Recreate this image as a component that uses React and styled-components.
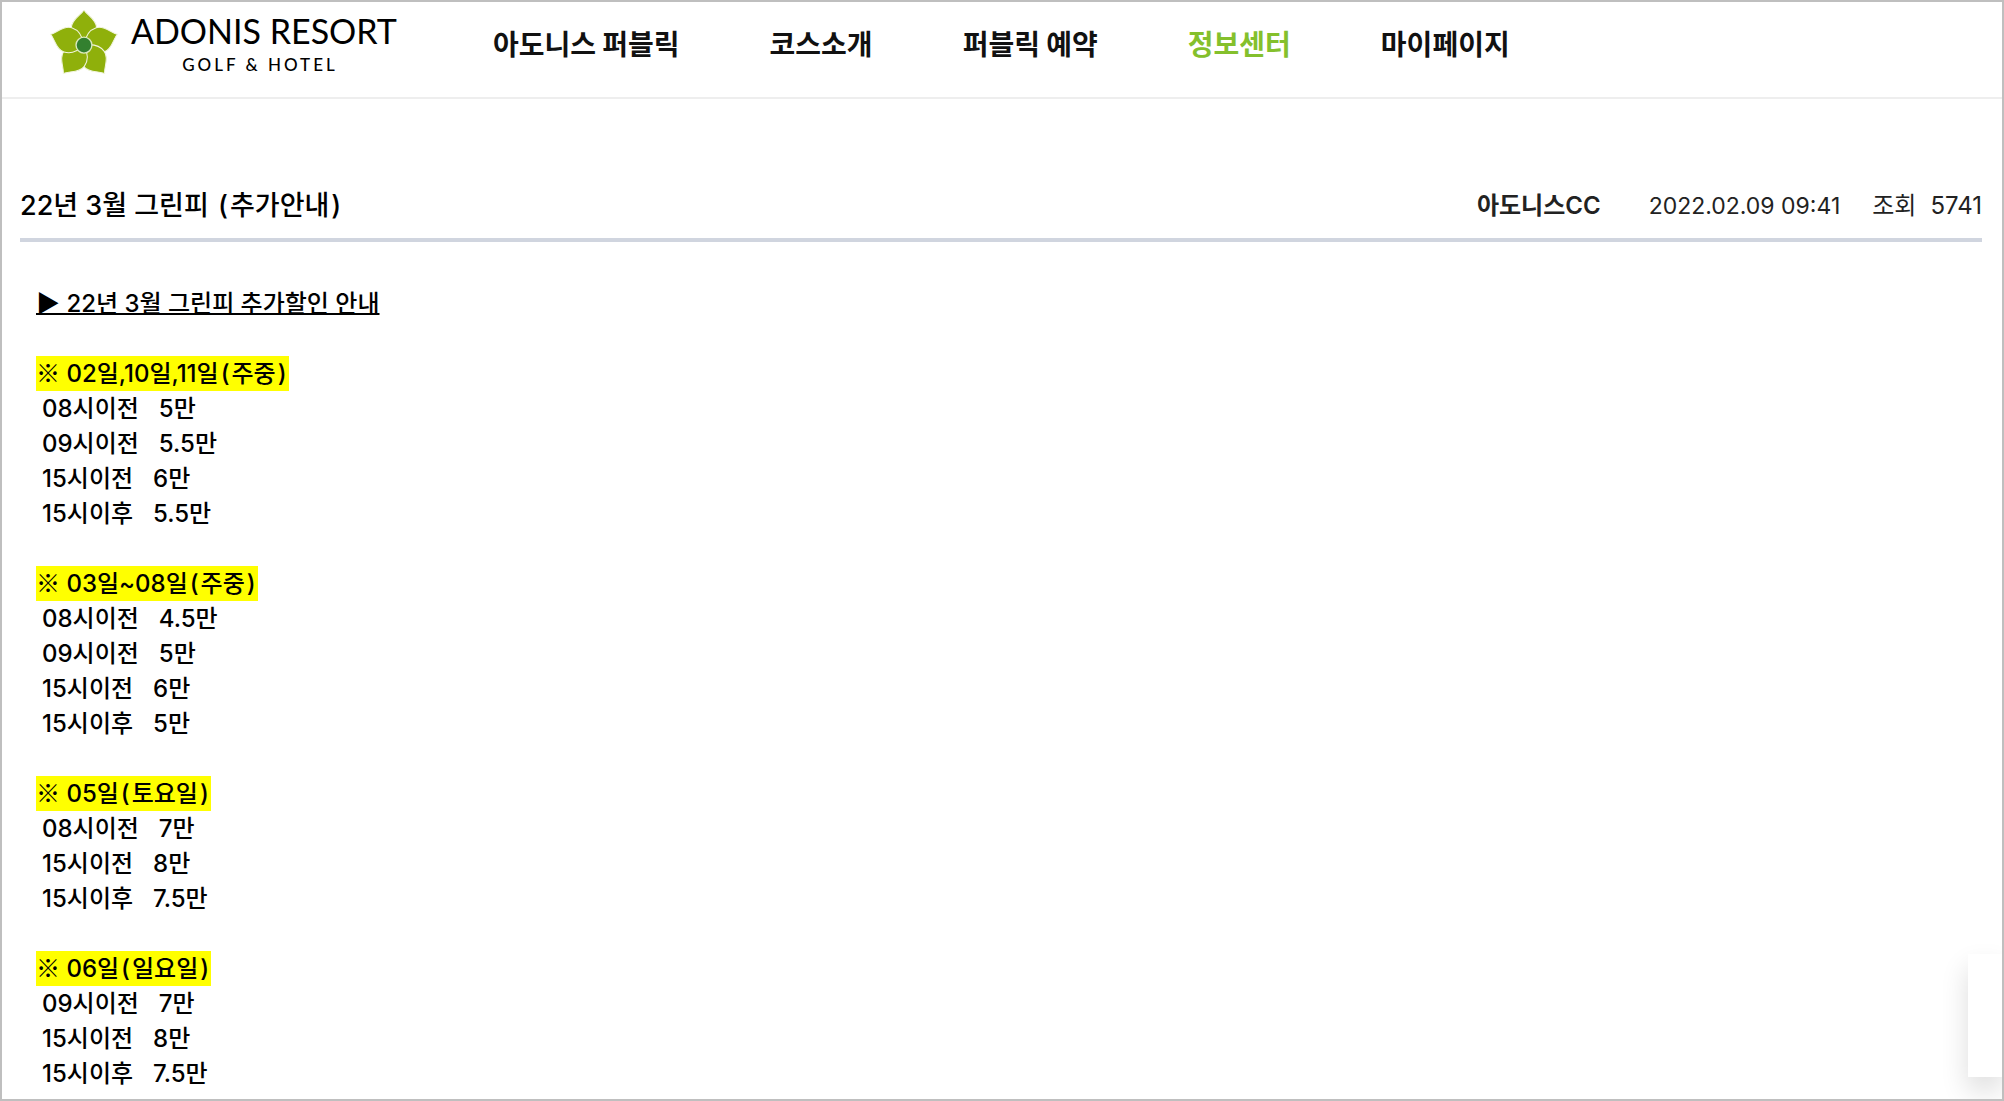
import React from "react";
import styled, { createGlobalStyle } from "styled-components";

const GlobalStyle = createGlobalStyle`
  *, *::before, *::after { box-sizing: border-box; }
  body {
    margin: 0;
    background: #fff;
    color: #000;
    font-family: Inter, "Noto Sans CJK KR", sans-serif;
  }
  h1, h2, p, ul { margin: 0; padding: 0; }
  ul { list-style: none; }
`;

const Page = styled.div`
  position: relative;
  min-height: 100vh;
  overflow: hidden;
  border: 2px solid #bfbfbf;
`;

const Header = styled.header`
  display: flex;
  align-items: flex-start;
  gap: 96px;
  height: 97px;
  padding: 8px 48px 0;
  border-bottom: 2px solid #eee;
`;

const Brand = styled.a`
  display: flex;
  align-items: flex-start;
  gap: 12px;
  color: #000;
  text-decoration: none;
`;

const BrandText = styled.span`
  display: flex;
  flex-direction: column;
  align-items: center;
`;

const BrandName = styled.span`
  font-family: Lato, sans-serif;
  font-size: 34px;
  line-height: 42px;
  white-space: nowrap;
`;

const BrandSub = styled.span`
  padding-right: 8px;
  font-family: Lato, sans-serif;
  font-size: 17px;
  font-weight: 500;
  line-height: 26px;
  letter-spacing: 3px;
  white-space: nowrap;
`;

const Menu = styled.ul`
  display: flex;
  gap: 90px;
  padding-top: 13px;
`;

const MenuLink = styled.a`
  font-family: "Noto Sans CJK KR", sans-serif;
  font-size: 28px;
  font-weight: 700;
  line-height: 40px;
  white-space: nowrap;
  text-decoration: none;
  color: ${({ $active }) => ($active ? "#84c02c" : "#111")};
`;

const Article = styled.article`
  padding: 86px 20px 8px 18px;
`;

const ArticleHead = styled.header`
  display: flex;
  justify-content: space-between;
  align-items: center;
  padding-bottom: 11px;
  border-bottom: 4px solid #d0d5df;
`;

const Title = styled.h1`
  font-size: 27px;
  font-weight: 500;
  line-height: 42px;
`;

const Meta = styled.div`
  display: flex;
  font-size: 24px;
  line-height: 42px;
  color: #222;
  white-space: nowrap;
`;

const Author = styled.strong`
  margin-right: 48px;
  font-weight: 600;
`;

const Posted = styled.time`
  font-size: 23px;
`;

const Views = styled.span`
  display: flex;
  gap: 14px;
  margin-left: 32px;
`;

const Content = styled.div`
  display: flex;
  flex-direction: column;
  align-items: flex-start;
  gap: 35px;
  padding: 44px 16px 0;
  font-size: 24px;
  font-weight: 500;
  line-height: 35px;
`;

const Lead = styled.p`
  text-decoration: underline;
  text-decoration-thickness: 2px;
  text-decoration-skip-ink: none;
`;

const Symbol = styled.span`
  font-family: "Noto Sans CJK KR", sans-serif;
  line-height: 1;
`;

const Paren = styled.span`
  margin: 0 2px;
`;

const DayTitle = styled.h2`
  width: fit-content;
  font-size: inherit;
  font-weight: inherit;
  background: #ff0;
`;

const Price = styled.li`
  display: flex;
  gap: 20px;
  padding-left: 6px;
`;

const SidePanel = styled.aside`
  position: absolute;
  right: 0;
  bottom: 22px;
  width: 34px;
  height: 123px;
  background: #fff;
  box-shadow: 0 14px 28px rgba(0, 0, 0, 0.14);
`;

const PETAL = "M0 -33 C3 -28 12 -24 12 -16 C12 -10 8 -4 0 0 C-8 -4 -12 -10 -12 -16 C-12 -24 -3 -28 0 -33 Z";

function Flower() {
  return (
    <svg width="69" height="66" viewBox="-32 -33 65 62" aria-hidden="true">
      {[0, 72, 144, 216, 288].map((a) => (
        <path key={a} d={PETAL} fill="#8fb00b" stroke="#f1f5de" strokeWidth="1" transform={`rotate(${a})`} />
      ))}
      <circle r="7.5" fill="#33802f" stroke="#dbe8bd" strokeWidth="1.3" />
    </svg>
  );
}

const menu = ["아도니스 퍼블릭", "코스소개", "퍼블릭 예약", "정보센터", "마이페이지"];

const days = [
  { date: "02일,10일,11일", kind: "주중", prices: [["08시이전", "5만"], ["09시이전", "5.5만"], ["15시이전", "6만"], ["15시이후", "5.5만"]] },
  { date: "03일~08일", kind: "주중", prices: [["08시이전", "4.5만"], ["09시이전", "5만"], ["15시이전", "6만"], ["15시이후", "5만"]] },
  { date: "05일", kind: "토요일", prices: [["08시이전", "7만"], ["15시이전", "8만"], ["15시이후", "7.5만"]] },
  { date: "06일", kind: "일요일", prices: [["09시이전", "7만"], ["15시이전", "8만"], ["15시이후", "7.5만"]] },
];

export default function App() {
  return (
    <Page>
      <GlobalStyle />
      <Header>
        <Brand href="#">
          <Flower />
          <BrandText>
            <BrandName>ADONIS RESORT</BrandName>
            <BrandSub>GOLF &amp; HOTEL</BrandSub>
          </BrandText>
        </Brand>
        <nav>
          <Menu>
            {menu.map((label) => (
              <li key={label}>
                <MenuLink href="#" $active={label === "정보센터"}>{label}</MenuLink>
              </li>
            ))}
          </Menu>
        </nav>
      </Header>
      <main>
        <Article>
          <ArticleHead>
            <Title>22년 3월 그린피 <Paren>(</Paren>추가안내<Paren>)</Paren></Title>
            <Meta>
              <Author>아도니스CC</Author>
              <Posted dateTime="2022-02-09T09:41">2022.02.09 09:41</Posted>
              <Views><span>조회</span><span>5741</span></Views>
            </Meta>
          </ArticleHead>
          <Content>
            <Lead><Symbol>▶</Symbol> 22년 3월 그린피 추가할인 안내</Lead>
            {days.map((day) => (
              <section key={day.date}>
                <DayTitle>
                  <Symbol>※</Symbol> {day.date}<Paren>(</Paren>{day.kind}<Paren>)</Paren>
                </DayTitle>
                <ul>
                  {day.prices.map(([time, price]) => (
                    <Price key={time}><span>{time}</span><span>{price}</span></Price>
                  ))}
                </ul>
              </section>
            ))}
          </Content>
        </Article>
      </main>
      <SidePanel />
    </Page>
  );
}
